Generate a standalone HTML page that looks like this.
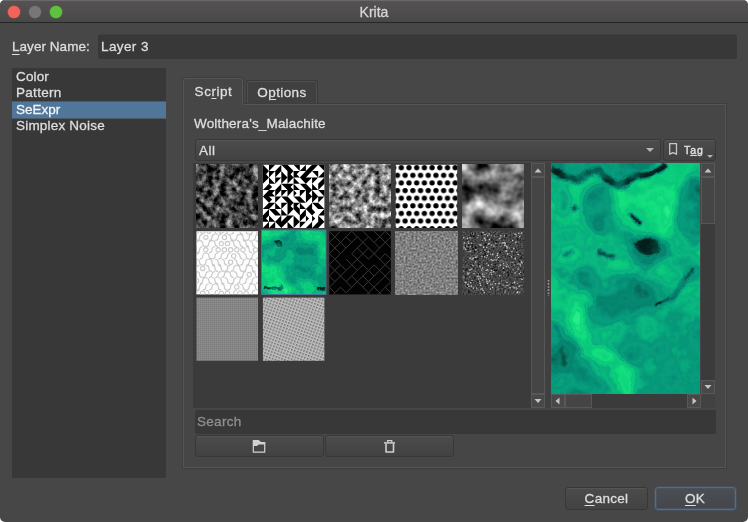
<!DOCTYPE html>
<html lang="en"><head><meta charset="utf-8"><title>Krita</title>
<style>
html,body{margin:0;padding:0;background:#fff;}
body{width:748px;height:522px;overflow:hidden;position:relative;font-family:"Liberation Sans",sans-serif;font-size:13px;color:#dedede;-webkit-text-stroke:0.3px currentColor;}
.win{position:absolute;left:0;top:0;width:748px;height:522px;background:#474747;border-radius:5px;overflow:hidden;will-change:transform;-webkit-font-smoothing:antialiased;}
.abs{position:absolute;box-sizing:border-box;}
.titlebar{left:0;top:0;width:748px;background:linear-gradient(#575355,#494848);border-bottom:1px solid #262626;height:23px;box-shadow:inset 0 1px 0 rgba(255,255,255,.13);}
.title{left:0;top:0;width:748px;height:22px;line-height:24px;text-align:center;font-size:14px;color:#d6d6d6;letter-spacing:0;}
.dot{width:12px;height:12px;border-radius:50%;top:5.5px;}
.lbl{white-space:nowrap;line-height:16px;}
u{text-decoration:underline;text-underline-offset:2px;text-decoration-thickness:1px;}
.field{background:#383838;border-radius:2px;}
.list{left:12px;top:68px;width:154px;height:410px;background:#383838;}
.item{left:0;width:154px;height:16px;line-height:16px;padding-left:4px;font-size:13.5px;letter-spacing:.1px;}
.sel{background:#4b6c8d;color:#f2f2f2;}
.pane{left:182px;top:103px;width:545px;height:366px;border:1px solid #3e3e3e;background:#464646;box-shadow:inset 0 0 0 1px #555;}
.tab{border:1px solid #3a3a3a;border-bottom:none;border-radius:3px 3px 0 0;text-align:center;font-size:13.5px;letter-spacing:.2px;}
.btn{border:1px solid #383838;border-radius:3px;background:linear-gradient(#4c4c4c,#424242);box-shadow:inset 0 1px 0 #555;}
.sb{background:#3b3b3b;}
.sbb{background:#484848;border:1px solid #585858;}
.sbt{background:#454545;border:1px solid #575757;}
</style></head>
<body>
<div class="win">
<div class="abs titlebar"></div>
<div class="abs title">Krita</div>
<div class="abs dot" style="left:8px;background:#f1635b;box-shadow:0 0 0 .5px #c8524b;"></div>
<div class="abs dot" style="left:29px;background:#787679;box-shadow:0 0 0 .5px #636164;"></div>
<div class="abs dot" style="left:50px;background:#5fc23e;box-shadow:0 0 0 .5px #4da232;"></div>
<div class="abs lbl" style="left:12px;top:39px;font-size:13.5px;letter-spacing:.05px;"><u style="text-underline-offset:3px">L</u>ayer Name:</div>
<div class="abs field" style="left:98px;top:35px;width:639px;height:24px;box-shadow:0 -1px 0 #3f3f3f;"></div>
<div class="abs lbl" style="left:101px;top:39px;font-size:13.5px;letter-spacing:.4px;">Layer 3</div>
<div class="abs list">
<div class="abs" style="left:0;top:33px;width:154px;height:18px;background:linear-gradient(#4a5a68 0,#4a5a68 1px,#50769a 1px,#50769a 17px,#4a5a68 17px);"></div>
<div class="abs item" style="top:1px;letter-spacing:0.15px;">Color</div>
<div class="abs item" style="top:17px;letter-spacing:0.3px;">Pattern</div>
<div class="abs item" style="top:34px;letter-spacing:0px;color:#f4f4f4;">SeExpr</div>
<div class="abs item" style="top:50px;letter-spacing:0.2px;">Simplex Noise</div>
</div>
<div class="abs pane"></div>
<div class="abs tab" style="left:246px;top:80px;width:72px;height:24px;line-height:23px;background:#404040;border-bottom:1px solid #3e3e3e;text-indent:0px;letter-spacing:.4px;box-shadow:inset 1px 1px 0 #505050,inset -1px 0 0 #505050;">O<u>p</u>tions</div>
<div class="abs tab" style="left:182px;top:77px;width:62px;height:28px;line-height:28px;background:#464646;box-shadow:inset 1px 1px 0 #555,inset -1px 0 0 #555;letter-spacing:.55px;text-indent:1px;border-color:#3e3e3e;">Sc<u>r</u>ipt</div>
<div class="abs lbl" style="left:194px;top:116px;font-size:13.5px;letter-spacing:.17px;">Wolthera's_Malachite</div>
<div class="abs btn" style="left:195px;top:139px;width:466px;height:22px;"></div>
<div class="abs lbl" style="left:199px;top:143px;font-size:13.5px;letter-spacing:.5px;">All</div>
<div class="abs" style="left:646px;top:148px;width:0;height:0;border-left:4px solid transparent;border-right:4px solid transparent;border-top:4px solid #b4b4b4;"></div>
<div class="abs btn" style="left:663px;top:139px;width:53px;height:22px;"></div>
<svg class="abs" style="left:668px;top:142px;" width="11" height="15" viewBox="0 0 11 15"><path d="M1.7 1.6h6.8v10.6l-3.4-1.5l-3.4 1.5z" fill="none" stroke="#c8c8c8" stroke-width="1.3" stroke-linejoin="round"/></svg>
<div class="abs lbl" style="left:684px;top:142px;font-size:10.5px;letter-spacing:.9px;color:#e0e0e0;-webkit-text-stroke:0.4px currentColor;">T<u style="text-underline-offset:1px">a</u>g</div>
<div class="abs" style="left:707px;top:155px;width:0;height:0;border-left:3px solid transparent;border-right:3px solid transparent;border-top:3px solid #b0b0b0;"></div>
<div class="abs" style="left:193px;top:163px;width:338px;height:245px;background:#3b3b3b;"></div>
<div class="abs" style="left:545px;top:163px;width:6px;height:245px;background:#404040;"></div>
<svg class="abs" style="left:0;top:0;" width="748" height="522" viewBox="0 0 748 522">
<defs>
<filter id="n1" x="0" y="0" width="100%" height="100%" color-interpolation-filters="sRGB"><feTurbulence type="fractalNoise" baseFrequency="0.15" numOctaves="4" seed="3" result="n"/><feColorMatrix type="matrix" values="1.3 0 0 0 -0.39  1.3 0 0 0 -0.39  1.3 0 0 0 -0.39  0 0 0 0 1"/></filter>
<filter id="n3" x="0" y="0" width="100%" height="100%" color-interpolation-filters="sRGB"><feTurbulence type="fractalNoise" baseFrequency="0.16" numOctaves="3" seed="11" result="n"/><feColorMatrix type="matrix" values="1.5 0 0 0 -0.24  1.5 0 0 0 -0.24  1.5 0 0 0 -0.24  0 0 0 0 1"/></filter>
<filter id="n5" x="0" y="0" width="100%" height="100%" color-interpolation-filters="sRGB"><feTurbulence type="fractalNoise" baseFrequency="0.055" numOctaves="3" seed="7" result="n"/><feColorMatrix type="matrix" values="1.5 0 0 0 -0.31  1.5 0 0 0 -0.31  1.5 0 0 0 -0.31  0 0 0 0 1"/></filter>
<filter id="n9" x="0" y="0" width="100%" height="100%" color-interpolation-filters="sRGB"><feTurbulence type="fractalNoise" baseFrequency="0.5" numOctaves="2" seed="5" result="n"/><feColorMatrix type="matrix" values="0.55 0 0 0 0.225  0.55 0 0 0 0.225  0.55 0 0 0 0.225  0 0 0 0 1"/></filter>
<filter id="n10" x="0" y="0" width="100%" height="100%" color-interpolation-filters="sRGB"><feTurbulence type="fractalNoise" baseFrequency="0.6" numOctaves="1" seed="9" result="n"/><feColorMatrix type="matrix" values="0.5 0 0 0 0.02  0.5 0 0 0 0.02  0.5 0 0 0 0.02  0 0 0 0 1"/></filter>
<clipPath id="c0"><rect x="196.5" y="164.8" width="61.5" height="63.2"/></clipPath>
<clipPath id="c1"><rect x="262.9" y="164.8" width="61.5" height="63.2"/></clipPath>
<clipPath id="c2"><rect x="329.3" y="164.8" width="61.5" height="63.2"/></clipPath>
<clipPath id="c3"><rect x="395.7" y="164.8" width="61.5" height="63.2"/></clipPath>
<clipPath id="c4"><rect x="462.1" y="164.8" width="61.5" height="63.2"/></clipPath>
<clipPath id="c5"><rect x="196.5" y="231.2" width="61.5" height="63.2"/></clipPath>
<clipPath id="c6"><rect x="262.9" y="231.2" width="61.5" height="63.2"/></clipPath>
<clipPath id="c7"><rect x="329.3" y="231.2" width="61.5" height="63.2"/></clipPath>
<clipPath id="c8"><rect x="395.7" y="231.2" width="61.5" height="63.2"/></clipPath>
<clipPath id="c9"><rect x="462.1" y="231.2" width="61.5" height="63.2"/></clipPath>
<clipPath id="c10"><rect x="196.5" y="297.6" width="61.5" height="63.2"/></clipPath>
<clipPath id="c11"><rect x="262.9" y="297.6" width="61.5" height="63.2"/></clipPath>
<pattern id="polka" x="397.45" y="165.10" width="7.7" height="15.24" patternUnits="userSpaceOnUse"><rect width="7.7" height="15.24" fill="#fff"/><circle cx="3.85" cy="2.7" r="2.65" fill="#000"/><circle cx="0" cy="10.32" r="2.65" fill="#000"/><circle cx="7.7" cy="10.32" r="2.65" fill="#000"/></pattern>
<pattern id="fine11" width="2" height="2" patternUnits="userSpaceOnUse"><rect width="2" height="2" fill="#858585"/><rect width="1" height="1" fill="#7b7b7b"/><rect x="1" y="1" width="1" height="1" fill="#8f8f8f"/></pattern>
<pattern id="fine12" width="3" height="3" patternUnits="userSpaceOnUse" patternTransform="rotate(20)"><rect width="3" height="3" fill="#bebebe"/><rect width="1.6" height="1.6" fill="#6e6e6e"/></pattern>
<clipPath id="c6m"><rect x="262" y="230.5" width="63.5" height="63.5"/></clipPath>
<filter id="mb" x="-20%" y="-20%" width="140%" height="140%" color-interpolation-filters="sRGB"><feGaussianBlur stdDeviation="2"/></filter>
<filter id="md" x="-20%" y="-20%" width="140%" height="140%" color-interpolation-filters="sRGB"><feGaussianBlur stdDeviation="0.7"/></filter>
<filter id="malt" filterUnits="userSpaceOnUse" x="255" y="224" width="78" height="78" color-interpolation-filters="sRGB"><feTurbulence type="fractalNoise" baseFrequency="0.07" numOctaves="4" seed="5" result="t"/><feDisplacementMap in="SourceGraphic" in2="t" scale="6" xChannelSelector="R" yChannelSelector="G" result="d"/><feColorMatrix in="t" type="matrix" values="0 0 1 0 0  0 0 1 0 0  0 0 1 0 0  0 0 0 0 1" result="n"/><feComposite in="d" in2="n" operator="arithmetic" k1="0" k2="1" k3="0.5" k4="-0.25" result="f"/><feComponentTransfer in="f"><feFuncR type="table" tableValues="0.016 0.020 0.020 0.024 0.024 0.024 0.020 0.024 0.031 0.024 0.031 0.039 0.031 0.039 0.047 0.039 0.055 0.078 0.055 0.118 0.157"/><feFuncG type="table" tableValues="0.118 0.176 0.275 0.373 0.471 0.541 0.510 0.573 0.627 0.588 0.667 0.729 0.682 0.769 0.816 0.773 0.843 0.882 0.831 0.910 0.933"/><feFuncB type="table" tableValues="0.110 0.157 0.227 0.314 0.392 0.447 0.431 0.471 0.490 0.471 0.494 0.502 0.490 0.494 0.490 0.486 0.486 0.502 0.486 0.529 0.549"/></feComponentTransfer></filter>
</defs>
<rect x="196.5" y="164.8" width="61.5" height="63.2" fill="#444" filter="url(#n1)"/>
<rect x="262.9" y="164.8" width="61.5" height="63.2" fill="#fff" />
<path d="M262.9 164.8L269.0 171.1L262.9 171.1ZM269.0 164.8L275.2 164.8L269.0 171.1ZM281.3 164.8L281.3 171.1L275.2 171.1ZM281.3 164.8L287.5 164.8L287.5 171.1ZM287.5 164.8L293.6 171.1L287.5 171.1ZM293.6 164.8L299.8 164.8L299.8 171.1ZM305.9 164.8L305.9 171.1L299.8 171.1ZM312.1 164.8L312.1 171.1L305.9 171.1ZM312.1 164.8L318.2 164.8L312.1 171.1ZM318.2 164.8L324.4 164.8L324.4 171.1ZM262.9 171.1L269.0 171.1L266.0 174.3L269.0 177.4L262.9 177.4ZM269.0 171.1L275.2 171.1L269.0 177.4ZM275.2 171.1L281.3 171.1L275.2 177.4ZM281.3 171.1L287.5 177.4L281.3 177.4ZM287.5 171.1L293.6 171.1L290.6 174.3L293.6 177.4L287.5 177.4ZM293.6 171.1L299.8 171.1L296.7 174.3L299.8 177.4L293.6 177.4ZM305.9 171.1L305.9 177.4L299.8 177.4ZM305.9 171.1L312.1 171.1L305.9 177.4ZM312.1 171.1L318.2 171.1L318.2 177.4ZM324.4 171.1L324.4 177.4L318.2 177.4ZM262.9 177.4L269.0 177.4L262.9 183.8ZM269.0 177.4L275.2 183.8L269.0 183.8ZM275.2 177.4L281.3 177.4L275.2 183.8ZM281.3 177.4L287.5 177.4L281.3 183.8ZM287.5 177.4L293.6 177.4L287.5 183.8ZM293.6 177.4L299.8 183.8L293.6 183.8ZM299.8 177.4L305.9 177.4L305.9 183.8ZM305.9 177.4L312.1 177.4L305.9 183.8ZM312.1 177.4L318.2 177.4L312.1 183.8ZM324.4 177.4L324.4 183.8L318.2 183.8ZM269.0 183.8L269.0 190.1L262.9 190.1ZM269.0 183.8L272.1 186.9L269.0 190.1ZM281.3 183.8L281.3 190.1L275.2 190.1ZM281.3 183.8L287.5 183.8L287.5 190.1ZM287.5 183.8L293.6 183.8L290.6 186.9L293.6 190.1L287.5 190.1ZM293.6 183.8L299.8 190.1L293.6 190.1ZM299.8 183.8L305.9 183.8L305.9 190.1ZM305.9 183.8L312.1 190.1L305.9 190.1ZM312.1 183.8L318.2 190.1L312.1 190.1ZM318.2 183.8L324.4 183.8L318.2 190.1ZM269.0 190.1L269.0 196.4L262.9 196.4ZM269.0 190.1L275.2 190.1L272.1 193.2L275.2 196.4L269.0 196.4ZM275.2 190.1L281.3 190.1L275.2 196.4ZM281.3 190.1L287.5 190.1L281.3 196.4ZM287.5 190.1L293.6 190.1L287.5 196.4ZM293.6 190.1L296.7 193.2L293.6 196.4ZM299.8 190.1L305.9 190.1L299.8 196.4ZM305.9 190.1L312.1 190.1L309.0 193.2L312.1 196.4L305.9 196.4ZM312.1 190.1L318.2 196.4L312.1 196.4ZM318.2 190.1L324.4 190.1L324.4 196.4ZM262.9 196.4L269.0 196.4L269.0 202.7ZM269.0 196.4L272.1 199.6L269.0 202.7ZM275.2 196.4L281.3 196.4L275.2 202.7ZM281.3 196.4L287.5 196.4L287.5 202.7ZM287.5 196.4L293.6 202.7L287.5 202.7ZM293.6 196.4L299.8 196.4L299.8 202.7ZM299.8 196.4L305.9 202.7L299.8 202.7ZM305.9 196.4L312.1 196.4L305.9 202.7ZM312.1 196.4L318.2 196.4L312.1 202.7ZM318.2 196.4L324.4 196.4L318.2 202.7ZM269.0 202.7L269.0 209.0L262.9 209.0ZM269.0 202.7L275.2 202.7L269.0 209.0ZM275.2 202.7L281.3 209.0L275.2 209.0ZM281.3 202.7L287.5 202.7L281.3 209.0ZM287.5 202.7L293.6 202.7L290.6 205.9L293.6 209.0L287.5 209.0ZM293.6 202.7L299.8 202.7L296.7 205.9L299.8 209.0L293.6 209.0ZM299.8 202.7L305.9 209.0L299.8 209.0ZM312.1 202.7L312.1 209.0L305.9 209.0ZM312.1 202.7L318.2 202.7L318.2 209.0ZM318.2 202.7L324.4 209.0L318.2 209.0ZM269.0 209.0L269.0 215.4L262.9 215.4ZM269.0 209.0L275.2 209.0L275.2 215.4ZM275.2 209.0L281.3 215.4L275.2 215.4ZM281.3 209.0L287.5 215.4L281.3 215.4ZM287.5 209.0L293.6 209.0L287.5 215.4ZM293.6 209.0L299.8 209.0L299.8 215.4ZM305.9 209.0L305.9 215.4L299.8 215.4ZM305.9 209.0L312.1 209.0L312.1 215.4ZM312.1 209.0L315.2 212.2L312.1 215.4ZM324.4 209.0L324.4 215.4L318.2 215.4ZM262.9 215.4L269.0 215.4L266.0 218.5L269.0 221.7L262.9 221.7ZM269.0 215.4L275.2 221.7L269.0 221.7ZM281.3 215.4L281.3 221.7L275.2 221.7ZM287.5 215.4L287.5 221.7L281.3 221.7ZM287.5 215.4L293.6 215.4L287.5 221.7ZM293.6 215.4L299.8 221.7L293.6 221.7ZM299.8 215.4L305.9 215.4L299.8 221.7ZM305.9 215.4L309.0 218.5L305.9 221.7ZM312.1 215.4L315.2 218.5L312.1 221.7ZM318.2 215.4L324.4 221.7L318.2 221.7ZM269.0 221.7L269.0 228.0L262.9 228.0ZM275.2 221.7L275.2 228.0L269.0 228.0ZM275.2 221.7L281.3 221.7L281.3 228.0ZM281.3 221.7L287.5 221.7L281.3 228.0ZM287.5 221.7L293.6 228.0L287.5 228.0ZM293.6 221.7L299.8 221.7L293.6 228.0ZM299.8 221.7L305.9 221.7L299.8 228.0ZM312.1 221.7L312.1 228.0L305.9 228.0ZM318.2 221.7L318.2 228.0L312.1 228.0ZM318.2 221.7L324.4 221.7L318.2 228.0Z" fill="#000"/>
<rect x="329.3" y="164.8" width="61.5" height="63.2" fill="#888" filter="url(#n3)"/>
<rect x="395.7" y="164.8" width="61.5" height="63.2" fill="url(#polka)" />
<rect x="462.1" y="164.8" width="61.5" height="63.2" fill="#888" filter="url(#n5)"/>
<rect x="196.5" y="231.2" width="61.5" height="63.2" fill="#fdfdfd" />
<path d="M194.3 231.2a2.2 2.2 0 1 0 4.4 0a2.2 2.2 0 1 0 -4.4 0M200.5 231.2a2.2 2.2 0 1 0 4.4 0a2.2 2.2 0 1 0 -4.4 0M206.7 231.2a2.2 2.2 0 1 0 4.4 0a2.2 2.2 0 1 0 -4.4 0M212.1 228.2q3.0 0.0 3.0 3.0q0.0 3.0 3.0 3.0M219.1 231.2a2.2 2.2 0 1 0 4.4 0a2.2 2.2 0 1 0 -4.4 0M230.5 228.2q-3.0 0.0 -3.0 3.0q0.0 3.0 -3.0 3.0M236.7 228.2q-3.0 0.0 -3.0 3.0q0.0 3.0 -3.0 3.0M236.9 228.2q3.0 0.0 3.0 3.0q0.0 3.0 3.0 3.0M243.1 228.2q3.0 0.0 3.0 3.0q0.0 3.0 3.0 3.0M255.3 228.2q-3.0 0.0 -3.0 3.0q0.0 3.0 -3.0 3.0M256.3 231.2a2.2 2.2 0 1 0 4.4 0a2.2 2.2 0 1 0 -4.4 0M202.6 234.4q-3.0 0.0 -3.0 3.0q0.0 3.0 -3.0 3.0M203.6 237.4a2.2 2.2 0 1 0 4.4 0a2.2 2.2 0 1 0 -4.4 0M215.0 234.4q-3.0 0.0 -3.0 3.0q0.0 3.0 -3.0 3.0M221.2 234.4q-3.0 0.0 -3.0 3.0q0.0 3.0 -3.0 3.0M222.2 237.4a2.2 2.2 0 1 0 4.4 0a2.2 2.2 0 1 0 -4.4 0M227.6 234.4q3.0 0.0 3.0 3.0q0.0 3.0 3.0 3.0M239.8 234.4q-3.0 0.0 -3.0 3.0q0.0 3.0 -3.0 3.0M240.0 234.4q3.0 0.0 3.0 3.0q0.0 3.0 3.0 3.0M252.2 234.4q-3.0 0.0 -3.0 3.0q0.0 3.0 -3.0 3.0M258.4 234.4q-3.0 0.0 -3.0 3.0q0.0 3.0 -3.0 3.0M258.6 234.4q3.0 0.0 3.0 3.0q0.0 3.0 3.0 3.0M199.5 240.6q-3.0 0.0 -3.0 3.0q0.0 3.0 -3.0 3.0M199.7 240.6q3.0 0.0 3.0 3.0q0.0 3.0 3.0 3.0M211.9 240.6q-3.0 0.0 -3.0 3.0q0.0 3.0 -3.0 3.0M212.1 240.6q3.0 0.0 3.0 3.0q0.0 3.0 3.0 3.0M219.1 243.6a2.2 2.2 0 1 0 4.4 0a2.2 2.2 0 1 0 -4.4 0M225.3 243.6a2.2 2.2 0 1 0 4.4 0a2.2 2.2 0 1 0 -4.4 0M230.7 240.6q3.0 0.0 3.0 3.0q0.0 3.0 3.0 3.0M236.9 240.6q3.0 0.0 3.0 3.0q0.0 3.0 3.0 3.0M243.1 240.6q3.0 0.0 3.0 3.0q0.0 3.0 3.0 3.0M249.3 240.6q3.0 0.0 3.0 3.0q0.0 3.0 3.0 3.0M255.5 240.6q3.0 0.0 3.0 3.0q0.0 3.0 3.0 3.0M202.6 246.8q-3.0 0.0 -3.0 3.0q0.0 3.0 -3.0 3.0M203.6 249.8a2.2 2.2 0 1 0 4.4 0a2.2 2.2 0 1 0 -4.4 0M215.0 246.8q-3.0 0.0 -3.0 3.0q0.0 3.0 -3.0 3.0M216.0 249.8a2.2 2.2 0 1 0 4.4 0a2.2 2.2 0 1 0 -4.4 0M222.2 249.8a2.2 2.2 0 1 0 4.4 0a2.2 2.2 0 1 0 -4.4 0M228.4 249.8a2.2 2.2 0 1 0 4.4 0a2.2 2.2 0 1 0 -4.4 0M234.6 249.8a2.2 2.2 0 1 0 4.4 0a2.2 2.2 0 1 0 -4.4 0M240.8 249.8a2.2 2.2 0 1 0 4.4 0a2.2 2.2 0 1 0 -4.4 0M246.2 246.8q3.0 0.0 3.0 3.0q0.0 3.0 3.0 3.0M253.2 249.8a2.2 2.2 0 1 0 4.4 0a2.2 2.2 0 1 0 -4.4 0M259.4 249.8a2.2 2.2 0 1 0 4.4 0a2.2 2.2 0 1 0 -4.4 0M199.5 253.0q-3.0 0.0 -3.0 3.0q0.0 3.0 -3.0 3.0M205.7 253.0q-3.0 0.0 -3.0 3.0q0.0 3.0 -3.0 3.0M205.9 253.0q3.0 0.0 3.0 3.0q0.0 3.0 3.0 3.0M218.1 253.0q-3.0 0.0 -3.0 3.0q0.0 3.0 -3.0 3.0M224.3 253.0q-3.0 0.0 -3.0 3.0q0.0 3.0 -3.0 3.0M230.5 253.0q-3.0 0.0 -3.0 3.0q0.0 3.0 -3.0 3.0M231.5 256.0a2.2 2.2 0 1 0 4.4 0a2.2 2.2 0 1 0 -4.4 0M236.9 253.0q3.0 0.0 3.0 3.0q0.0 3.0 3.0 3.0M243.1 253.0q3.0 0.0 3.0 3.0q0.0 3.0 3.0 3.0M255.3 253.0q-3.0 0.0 -3.0 3.0q0.0 3.0 -3.0 3.0M261.5 253.0q-3.0 0.0 -3.0 3.0q0.0 3.0 -3.0 3.0M196.6 259.2q3.0 0.0 3.0 3.0q0.0 3.0 3.0 3.0M208.8 259.2q-3.0 0.0 -3.0 3.0q0.0 3.0 -3.0 3.0M209.0 259.2q3.0 0.0 3.0 3.0q0.0 3.0 3.0 3.0M215.2 259.2q3.0 0.0 3.0 3.0q0.0 3.0 3.0 3.0M221.4 259.2q3.0 0.0 3.0 3.0q0.0 3.0 3.0 3.0M228.4 262.2a2.2 2.2 0 1 0 4.4 0a2.2 2.2 0 1 0 -4.4 0M233.8 259.2q3.0 0.0 3.0 3.0q0.0 3.0 3.0 3.0M246.0 259.2q-3.0 0.0 -3.0 3.0q0.0 3.0 -3.0 3.0M252.2 259.2q-3.0 0.0 -3.0 3.0q0.0 3.0 -3.0 3.0M252.4 259.2q3.0 0.0 3.0 3.0q0.0 3.0 3.0 3.0M264.6 259.2q-3.0 0.0 -3.0 3.0q0.0 3.0 -3.0 3.0M199.5 265.4q-3.0 0.0 -3.0 3.0q0.0 3.0 -3.0 3.0M200.5 268.4a2.2 2.2 0 1 0 4.4 0a2.2 2.2 0 1 0 -4.4 0M205.9 265.4q3.0 0.0 3.0 3.0q0.0 3.0 3.0 3.0M212.1 265.4q3.0 0.0 3.0 3.0q0.0 3.0 3.0 3.0M218.3 265.4q3.0 0.0 3.0 3.0q0.0 3.0 3.0 3.0M230.5 265.4q-3.0 0.0 -3.0 3.0q0.0 3.0 -3.0 3.0M236.7 265.4q-3.0 0.0 -3.0 3.0q0.0 3.0 -3.0 3.0M236.9 265.4q3.0 0.0 3.0 3.0q0.0 3.0 3.0 3.0M249.1 265.4q-3.0 0.0 -3.0 3.0q0.0 3.0 -3.0 3.0M249.3 265.4q3.0 0.0 3.0 3.0q0.0 3.0 3.0 3.0M255.5 265.4q3.0 0.0 3.0 3.0q0.0 3.0 3.0 3.0M196.6 271.6q3.0 0.0 3.0 3.0q0.0 3.0 3.0 3.0M208.8 271.6q-3.0 0.0 -3.0 3.0q0.0 3.0 -3.0 3.0M215.0 271.6q-3.0 0.0 -3.0 3.0q0.0 3.0 -3.0 3.0M221.2 271.6q-3.0 0.0 -3.0 3.0q0.0 3.0 -3.0 3.0M227.4 271.6q-3.0 0.0 -3.0 3.0q0.0 3.0 -3.0 3.0M227.6 271.6q3.0 0.0 3.0 3.0q0.0 3.0 3.0 3.0M233.8 271.6q3.0 0.0 3.0 3.0q0.0 3.0 3.0 3.0M246.0 271.6q-3.0 0.0 -3.0 3.0q0.0 3.0 -3.0 3.0M247.0 274.6a2.2 2.2 0 1 0 4.4 0a2.2 2.2 0 1 0 -4.4 0M252.4 271.6q3.0 0.0 3.0 3.0q0.0 3.0 3.0 3.0M264.6 271.6q-3.0 0.0 -3.0 3.0q0.0 3.0 -3.0 3.0M194.3 280.8a2.2 2.2 0 1 0 4.4 0a2.2 2.2 0 1 0 -4.4 0M205.7 277.8q-3.0 0.0 -3.0 3.0q0.0 3.0 -3.0 3.0M205.9 277.8q3.0 0.0 3.0 3.0q0.0 3.0 3.0 3.0M212.1 277.8q3.0 0.0 3.0 3.0q0.0 3.0 3.0 3.0M218.3 277.8q3.0 0.0 3.0 3.0q0.0 3.0 3.0 3.0M224.5 277.8q3.0 0.0 3.0 3.0q0.0 3.0 3.0 3.0M236.7 277.8q-3.0 0.0 -3.0 3.0q0.0 3.0 -3.0 3.0M242.9 277.8q-3.0 0.0 -3.0 3.0q0.0 3.0 -3.0 3.0M249.1 277.8q-3.0 0.0 -3.0 3.0q0.0 3.0 -3.0 3.0M255.3 277.8q-3.0 0.0 -3.0 3.0q0.0 3.0 -3.0 3.0M261.5 277.8q-3.0 0.0 -3.0 3.0q0.0 3.0 -3.0 3.0M202.6 284.0q-3.0 0.0 -3.0 3.0q0.0 3.0 -3.0 3.0M208.8 284.0q-3.0 0.0 -3.0 3.0q0.0 3.0 -3.0 3.0M215.0 284.0q-3.0 0.0 -3.0 3.0q0.0 3.0 -3.0 3.0M215.2 284.0q3.0 0.0 3.0 3.0q0.0 3.0 3.0 3.0M221.4 284.0q3.0 0.0 3.0 3.0q0.0 3.0 3.0 3.0M233.6 284.0q-3.0 0.0 -3.0 3.0q0.0 3.0 -3.0 3.0M234.6 287.0a2.2 2.2 0 1 0 4.4 0a2.2 2.2 0 1 0 -4.4 0M240.0 284.0q3.0 0.0 3.0 3.0q0.0 3.0 3.0 3.0M252.2 284.0q-3.0 0.0 -3.0 3.0q0.0 3.0 -3.0 3.0M252.4 284.0q3.0 0.0 3.0 3.0q0.0 3.0 3.0 3.0M264.6 284.0q-3.0 0.0 -3.0 3.0q0.0 3.0 -3.0 3.0M199.5 290.2q-3.0 0.0 -3.0 3.0q0.0 3.0 -3.0 3.0M200.5 293.2a2.2 2.2 0 1 0 4.4 0a2.2 2.2 0 1 0 -4.4 0M205.9 290.2q3.0 0.0 3.0 3.0q0.0 3.0 3.0 3.0M218.1 290.2q-3.0 0.0 -3.0 3.0q0.0 3.0 -3.0 3.0M219.1 293.2a2.2 2.2 0 1 0 4.4 0a2.2 2.2 0 1 0 -4.4 0M225.3 293.2a2.2 2.2 0 1 0 4.4 0a2.2 2.2 0 1 0 -4.4 0M236.7 290.2q-3.0 0.0 -3.0 3.0q0.0 3.0 -3.0 3.0M237.7 293.2a2.2 2.2 0 1 0 4.4 0a2.2 2.2 0 1 0 -4.4 0M243.9 293.2a2.2 2.2 0 1 0 4.4 0a2.2 2.2 0 1 0 -4.4 0M255.3 290.2q-3.0 0.0 -3.0 3.0q0.0 3.0 -3.0 3.0M261.5 290.2q-3.0 0.0 -3.0 3.0q0.0 3.0 -3.0 3.0" fill="none" stroke="#c9c9c9" stroke-width="1.1" clip-path="url(#c5)"/>
<rect x="261" y="229.5" width="65.5" height="65.5" fill="#4d7590"/>
<g clip-path="url(#c6m)"><g filter="url(#malt)">
<rect x="250" y="220" width="90" height="90" fill="#808080"/>
<g filter="url(#mb)">
<rect x="250" y="220" width="90" height="90" fill="#808080"/>
<path d="M254 224h34l-4 14l-14 6l-16 -2z" fill="#cccccc"/>
<path d="M290 222h44v12l-24 6z" fill="#a8a8a8"/>
<ellipse cx="279" cy="247" rx="12" ry="9" fill="#5c5c5c"/>
<path d="M256 262l18 2l10 12l8 14l-6 10h-12l-18 -14z" fill="#d6d6d6"/>
<path d="M316 234l16 -2v30l-14 -6z" fill="#bdbdbd"/>
<ellipse cx="305" cy="262" rx="14" ry="16" fill="#616161"/>
<path d="M290 284l20 -4l20 6v14h-40z" fill="#9e9e9e"/>
</g>
<g filter="url(#md)">
<circle cx="278" cy="243.5" r="3.4" fill="#0a0a0a"/>
<path d="M264 287l5 2l5 -1l5 1l4 -3" fill="none" stroke="#292929" stroke-width="3.2"/>
<path d="M316 288l6 2l4 -1" fill="none" stroke="#292929" stroke-width="3"/>
</g>
</g></g>
<rect x="329.3" y="231.2" width="61.5" height="63.2" fill="#020202" />
<path d="M323.7 225.6l5.6 5.6M334.9 225.6l-5.6 5.6M334.9 225.6l5.6 5.6M346.1 225.6l-5.6 5.6M346.1 225.6l5.6 5.6M357.3 225.6l-5.6 5.6M357.3 225.6l5.6 5.6M368.5 225.6l-5.6 5.6M368.5 225.6l5.6 5.6M379.7 225.6l-5.6 5.6M379.7 225.6l5.6 5.6M390.9 225.6l-5.6 5.6M390.9 225.6l5.6 5.6M329.3 231.2l-5.6 5.6M329.3 231.2l5.6 5.6M340.5 231.2l-5.6 5.6M351.7 231.2l-5.6 5.6M351.7 231.2l5.6 5.6M362.9 231.2l5.6 5.6M374.1 231.2l5.6 5.6M385.3 231.2l-5.6 5.6M385.3 231.2l5.6 5.6M396.5 231.2l-5.6 5.6M323.7 236.8l5.6 5.6M334.9 236.8l-5.6 5.6M334.9 236.8l5.6 5.6M346.1 236.8l-5.6 5.6M346.1 236.8l5.6 5.6M357.3 236.8l-5.6 5.6M357.3 236.8l5.6 5.6M368.5 236.8l-5.6 5.6M368.5 236.8l5.6 5.6M379.7 236.8l-5.6 5.6M379.7 236.8l5.6 5.6M390.9 236.8l-5.6 5.6M390.9 236.8l5.6 5.6M402.1 236.8l-5.6 5.6M329.3 242.4l-5.6 5.6M329.3 242.4l5.6 5.6M340.5 242.4l-5.6 5.6M340.5 242.4l5.6 5.6M351.7 242.4l-5.6 5.6M362.9 242.4l-5.6 5.6M362.9 242.4l5.6 5.6M374.1 242.4l5.6 5.6M385.3 242.4l-5.6 5.6M385.3 242.4l5.6 5.6M396.5 242.4l-5.6 5.6M396.5 242.4l5.6 5.6M323.7 248.0l5.6 5.6M334.9 248.0l-5.6 5.6M334.9 248.0l5.6 5.6M346.1 248.0l-5.6 5.6M357.3 248.0l-5.6 5.6M357.3 248.0l5.6 5.6M368.5 248.0l-5.6 5.6M368.5 248.0l5.6 5.6M379.7 248.0l-5.6 5.6M390.9 248.0l5.6 5.6M402.1 248.0l-5.6 5.6M329.3 253.6l-5.6 5.6M329.3 253.6l5.6 5.6M340.5 253.6l-5.6 5.6M351.7 253.6l5.6 5.6M362.9 253.6l-5.6 5.6M362.9 253.6l5.6 5.6M374.1 253.6l-5.6 5.6M374.1 253.6l5.6 5.6M385.3 253.6l-5.6 5.6M385.3 253.6l5.6 5.6M396.5 253.6l-5.6 5.6M396.5 253.6l5.6 5.6M323.7 259.2l5.6 5.6M334.9 259.2l-5.6 5.6M334.9 259.2l5.6 5.6M346.1 259.2l5.6 5.6M357.3 259.2l-5.6 5.6M357.3 259.2l5.6 5.6M379.7 259.2l5.6 5.6M390.9 259.2l-5.6 5.6M390.9 259.2l5.6 5.6M329.3 264.8l5.6 5.6M340.5 264.8l-5.6 5.6M340.5 264.8l5.6 5.6M351.7 264.8l-5.6 5.6M351.7 264.8l5.6 5.6M362.9 264.8l-5.6 5.6M362.9 264.8l5.6 5.6M374.1 264.8l-5.6 5.6M374.1 264.8l5.6 5.6M385.3 264.8l-5.6 5.6M385.3 264.8l5.6 5.6M396.5 264.8l5.6 5.6M323.7 270.4l5.6 5.6M334.9 270.4l-5.6 5.6M334.9 270.4l5.6 5.6M346.1 270.4l-5.6 5.6M357.3 270.4l-5.6 5.6M368.5 270.4l-5.6 5.6M368.5 270.4l5.6 5.6M379.7 270.4l-5.6 5.6M379.7 270.4l5.6 5.6M390.9 270.4l-5.6 5.6M390.9 270.4l5.6 5.6M402.1 270.4l-5.6 5.6M329.3 276.0l-5.6 5.6M329.3 276.0l5.6 5.6M340.5 276.0l-5.6 5.6M340.5 276.0l5.6 5.6M351.7 276.0l-5.6 5.6M351.7 276.0l5.6 5.6M362.9 276.0l-5.6 5.6M362.9 276.0l5.6 5.6M374.1 276.0l-5.6 5.6M385.3 276.0l-5.6 5.6M385.3 276.0l5.6 5.6M396.5 276.0l-5.6 5.6M396.5 276.0l5.6 5.6M323.7 281.6l5.6 5.6M334.9 281.6l-5.6 5.6M346.1 281.6l5.6 5.6M357.3 281.6l-5.6 5.6M357.3 281.6l5.6 5.6M368.5 281.6l-5.6 5.6M368.5 281.6l5.6 5.6M379.7 281.6l-5.6 5.6M390.9 281.6l-5.6 5.6M390.9 281.6l5.6 5.6M329.3 287.2l-5.6 5.6M329.3 287.2l5.6 5.6M340.5 287.2l-5.6 5.6M340.5 287.2l5.6 5.6M351.7 287.2l-5.6 5.6M362.9 287.2l5.6 5.6M374.1 287.2l-5.6 5.6M374.1 287.2l5.6 5.6M385.3 287.2l-5.6 5.6M385.3 287.2l5.6 5.6M396.5 287.2l-5.6 5.6M396.5 287.2l5.6 5.6M323.7 292.8l5.6 5.6M334.9 292.8l-5.6 5.6M368.5 292.8l-5.6 5.6M368.5 292.8l5.6 5.6M379.7 292.8l-5.6 5.6M379.7 292.8l5.6 5.6M390.9 292.8l-5.6 5.6M390.9 292.8l5.6 5.6M402.1 292.8l-5.6 5.6M329.3 298.4l-5.6 5.6M329.3 298.4l5.6 5.6M340.5 298.4l5.6 5.6M362.9 298.4l5.6 5.6M374.1 298.4l-5.6 5.6M374.1 298.4l5.6 5.6M385.3 298.4l-5.6 5.6M385.3 298.4l5.6 5.6M396.5 298.4l-5.6 5.6" fill="none" stroke="#3a3a3a" stroke-width="1" clip-path="url(#c7)"/>
<rect x="395.7" y="231.2" width="61.5" height="63.2" fill="#888" filter="url(#n9)"/>
<rect x="462.1" y="231.2" width="61.5" height="63.2" fill="#4e4e4e" filter="url(#n10)"/>
<path d="M471.9 233.4h0M472.1 259.2h0M468.0 274.1h0M487.3 283.4h0M470.2 258.2h0M481.9 270.1h0M504.4 235.8h0M511.3 256.8h0M498.5 261.4h0M520.7 272.6h0M470.3 246.8h0M465.2 282.2h0M494.0 246.1h0M486.3 279.2h0M465.8 249.3h0M500.9 235.8h0M475.8 249.7h0M473.4 288.3h0M483.6 247.2h0M522.0 263.0h0M491.5 270.4h0M519.0 286.5h0M480.6 285.3h0M504.8 245.6h0M471.3 286.1h0M519.9 278.5h0M497.5 253.6h0M506.6 266.6h0M509.8 255.5h0M486.7 247.5h0M482.5 274.0h0M485.0 234.5h0M483.6 247.0h0M518.8 233.2h0M480.0 244.8h0M504.4 242.5h0M499.1 283.4h0M484.1 276.8h0M492.8 254.4h0M487.7 269.9h0M487.4 255.6h0M487.0 281.3h0M514.7 282.1h0M506.6 251.1h0M514.2 282.8h0M515.1 234.2h0M464.4 243.0h0M505.5 250.6h0M519.5 273.8h0M512.7 240.5h0M469.9 237.8h0M464.1 247.7h0M488.4 265.4h0M518.2 254.5h0M464.3 246.5h0M521.5 261.9h0M500.1 265.0h0M507.2 247.9h0M497.4 255.5h0M484.4 292.8h0M493.0 260.4h0M487.0 245.0h0M467.9 273.1h0M503.0 243.0h0M480.1 283.3h0M490.4 289.1h0M499.6 275.7h0M488.2 251.6h0M487.8 235.8h0M470.4 251.2h0M470.7 282.8h0M470.0 269.9h0M489.1 234.0h0M484.6 256.8h0M495.4 283.7h0M484.9 250.0h0M471.8 269.0h0M520.1 264.8h0M480.3 278.2h0M484.5 238.4h0M482.0 289.1h0M504.9 245.0h0M519.7 236.7h0M522.0 279.6h0M516.9 251.8h0M491.7 245.0h0M467.5 238.4h0M503.3 268.2h0M491.2 259.6h0M475.4 257.5h0M503.6 263.8h0M472.0 265.3h0M482.6 268.0h0M477.2 276.7h0M515.6 242.3h0M492.6 287.4h0M479.7 265.8h0M513.9 248.4h0M515.0 273.0h0M466.0 282.8h0M464.1 276.9h0M481.1 245.2h0M468.7 243.3h0M510.0 287.8h0M483.2 290.5h0M479.0 276.1h0M507.0 285.6h0M517.1 292.8h0M478.6 279.0h0M463.8 237.8h0M514.1 287.9h0M469.0 286.2h0M511.9 251.5h0M482.0 256.3h0M505.3 243.2h0M521.5 233.1h0M484.4 251.4h0M469.9 258.2h0M506.8 246.4h0M500.0 238.2h0M507.5 253.9h0M471.6 243.4h0M488.6 243.9h0M489.6 239.5h0M473.3 258.1h0M467.8 284.5h0M482.9 276.0h0M467.8 241.5h0M515.2 258.4h0M498.5 257.5h0M474.0 273.8h0M517.7 291.9h0M467.2 286.9h0M486.1 270.2h0M489.7 280.8h0M475.8 262.1h0M500.2 265.2h0M485.6 240.1h0M466.9 246.0h0M483.0 232.8h0M493.7 271.7h0M491.5 274.2h0" stroke="#c8c8c8" stroke-width="1.6" stroke-linecap="round" fill="none"/>
<path d="M491.4 272.3h0M479.6 281.5h0M498.8 266.3h0M516.6 236.2h0M467.2 287.8h0M484.8 274.2h0M493.5 281.5h0M495.8 243.4h0M464.0 248.8h0M482.5 280.1h0M501.0 246.5h0M518.8 263.7h0M478.5 273.8h0M498.0 286.9h0M505.1 287.1h0M516.1 287.5h0M503.9 265.3h0M470.9 264.9h0M468.9 251.5h0M489.6 243.5h0M476.5 288.0h0M490.5 284.2h0M476.9 265.1h0M486.7 273.2h0M520.5 266.0h0M471.6 246.3h0M478.3 235.5h0M480.3 289.1h0M482.4 240.3h0M512.9 269.3h0M494.2 235.9h0M499.1 238.9h0M495.0 259.7h0M501.7 280.9h0M500.8 260.8h0M486.3 257.7h0M492.4 284.2h0M487.3 269.3h0M491.4 245.1h0M477.7 237.9h0M519.3 292.1h0M517.6 268.8h0M506.4 282.4h0M477.1 255.9h0M469.6 277.1h0M473.7 265.7h0M481.0 252.7h0M486.8 263.7h0M475.1 271.1h0M490.8 254.3h0M507.6 247.1h0M506.1 262.9h0M516.4 241.8h0M516.8 288.8h0M508.4 265.9h0M512.6 283.2h0M517.4 264.1h0M512.9 286.7h0M516.3 234.2h0M476.5 257.2h0M507.3 264.3h0M503.2 285.0h0M476.7 256.9h0M480.1 267.0h0M507.6 282.3h0M473.5 233.9h0M487.9 252.3h0M482.2 288.8h0M488.8 282.0h0M519.7 285.7h0M516.0 288.8h0M503.0 260.9h0M504.9 292.0h0M517.0 271.8h0M518.5 269.3h0M517.5 283.3h0M502.1 242.9h0M477.0 288.9h0M504.3 272.1h0M489.7 274.1h0M467.5 240.6h0M505.6 291.9h0M521.2 273.9h0M472.0 280.4h0M491.3 235.8h0M509.1 267.6h0M491.8 284.1h0M495.6 257.1h0M497.9 289.3h0M491.8 264.4h0M499.9 243.0h0M521.2 262.6h0M509.7 248.1h0M496.5 259.9h0M490.3 272.3h0M463.9 271.2h0M514.3 265.0h0M469.7 273.0h0M480.0 266.3h0M509.1 284.3h0M497.2 258.8h0M512.2 262.6h0M492.9 269.8h0M515.7 259.6h0" stroke="#a8a8a8" stroke-width="1.3" stroke-linecap="round" fill="none"/>
<path d="M468.9 292.1h0M465.4 276.4h0M519.7 261.7h0M474.7 277.8h0M465.9 270.0h0M477.7 258.9h0M496.4 270.3h0M484.3 251.5h0M508.0 272.4h0M486.4 285.3h0M475.6 248.0h0M474.4 251.5h0M505.4 249.5h0M503.7 269.8h0M519.8 277.7h0M465.2 246.4h0M483.5 255.7h0M471.0 265.3h0M485.1 253.8h0M478.2 281.4h0M498.1 261.5h0M481.5 234.2h0M509.8 256.2h0M492.3 268.9h0M472.1 246.4h0M485.1 244.1h0M478.9 264.8h0M494.5 270.2h0M470.8 235.3h0M512.0 284.5h0M495.1 264.6h0M516.5 250.7h0M500.1 252.4h0M486.5 244.8h0M496.1 241.6h0M473.1 249.1h0M475.3 258.9h0M474.3 236.5h0M468.3 248.7h0M521.2 257.2h0M479.6 274.6h0M506.2 235.5h0M467.1 240.8h0M468.7 245.4h0M508.5 275.2h0M521.1 273.4h0M467.1 286.5h0M517.9 238.9h0M472.1 244.5h0M473.9 236.3h0M475.8 247.4h0M491.9 239.9h0M468.7 291.1h0M472.3 233.3h0" stroke="#101010" stroke-width="1.8" stroke-linecap="round" fill="none"/>
<rect x="196.5" y="297.6" width="61.5" height="63.2" fill="url(#fine11)" />
<rect x="262.9" y="297.6" width="61.5" height="63.2" fill="url(#fine12)" />
</svg>
<div class="abs sb" style="left:531px;top:163px;width:14px;height:245px;"></div>
<div class="abs sbb" style="left:531px;top:163px;width:14px;height:14px;"></div>
<div class="abs sbt" style="left:531px;top:177px;width:14px;height:217px;"></div>
<div class="abs sbb" style="left:531px;top:394px;width:14px;height:14px;"></div>
<svg class="abs" style="left:551px;top:163px;" width="149" height="231" viewBox="551 163 149 231">
<defs>
<filter id="pb" x="-10%" y="-10%" width="120%" height="120%" color-interpolation-filters="sRGB"><feGaussianBlur stdDeviation="3"/></filter>
<filter id="pd" x="-20%" y="-20%" width="140%" height="140%" color-interpolation-filters="sRGB"><feGaussianBlur stdDeviation="1.1"/></filter>
<filter id="mal" filterUnits="userSpaceOnUse" x="531" y="143" width="189" height="271" color-interpolation-filters="sRGB">
<feTurbulence type="fractalNoise" baseFrequency="0.032" numOctaves="5" seed="8" result="t"/>
<feDisplacementMap in="SourceGraphic" in2="t" scale="12" xChannelSelector="R" yChannelSelector="G" result="d"/>
<feColorMatrix in="t" type="matrix" values="0 0 1 0 0  0 0 1 0 0  0 0 1 0 0  0 0 0 0 1" result="n"/>
<feComposite in="d" in2="n" operator="arithmetic" k1="0" k2="1" k3="0.5" k4="-0.25" result="f"/>
<feComponentTransfer in="f">
<feFuncR type="table" tableValues="0.016 0.020 0.020 0.024 0.024 0.024 0.020 0.024 0.031 0.024 0.031 0.039 0.031 0.039 0.047 0.039 0.055 0.078 0.055 0.118 0.157"/>
<feFuncG type="table" tableValues="0.118 0.176 0.275 0.373 0.471 0.541 0.510 0.573 0.627 0.588 0.667 0.729 0.682 0.769 0.816 0.773 0.843 0.882 0.831 0.910 0.933"/>
<feFuncB type="table" tableValues="0.110 0.157 0.227 0.314 0.392 0.447 0.431 0.471 0.490 0.471 0.494 0.502 0.490 0.494 0.490 0.486 0.486 0.502 0.486 0.529 0.549"/>
</feComponentTransfer>
</filter>
<clipPath id="pc"><rect x="551" y="163" width="149" height="231"/></clipPath>
</defs>
<g clip-path="url(#pc)">
<g filter="url(#mal)">
<rect x="520" y="130" width="210" height="300" fill="#949494"/>
<g filter="url(#pb)">
<rect x="520" y="130" width="210" height="300" fill="#949494"/>
<path d="M520 130h150l-8 36l-24 14l-20 8l-14 -6l-14 -10l-20 8l-24 -4l-26 -8z" fill="#545454"/>
<path d="M668 130h62v50l-44 6l-12 36l-8 14l-30 -2l-22 -24l2 -22l24 -10l16 -18z" fill="#cccccc"/>
<path d="M520 184l50 -4l14 6l-6 44l8 34l40 0l10 10l-30 8l-40 -4l-46 4z" fill="#a3a3a3"/>
<ellipse cx="562" cy="200" rx="9" ry="14" fill="#7a7a7a"/>
<ellipse cx="566" cy="236" rx="10" ry="10" fill="#808080"/>
<ellipse cx="560" cy="272" rx="8" ry="8" fill="#757575"/>
<ellipse cx="598" cy="208" rx="15" ry="24" fill="#575757"/>
<ellipse cx="694" cy="212" rx="20" ry="34" fill="#5c5c5c"/>
<ellipse cx="698" cy="196" rx="10" ry="12" fill="#4c4c4c"/>
<ellipse cx="647" cy="250" rx="20" ry="17" fill="#525252"/>
<path d="M575 272l40 -6l40 14l80 -16v170h-100l-18 -56l-26 -26l-24 -30z" fill="#737373"/>
<ellipse cx="614" cy="296" rx="36" ry="22" fill="#575757"/>
<ellipse cx="650" cy="345" rx="30" ry="30" fill="#6e6e6e"/>
<path d="M520 318l50 4l6 24l-6 24l-50 6z" fill="#4f4f4f"/>
<path d="M520 366h66l30 20l10 50h-106z" fill="#616161"/>
<path d="M520 286l40 2l30 4l4 12l-30 4l-44 2z" fill="#b8b8b8"/>
<path d="M576 300l8 20l8 26l20 8l20 16l4 40h-9l-6 -32l-18 -14l-24 -8l-8 -30l-4 -22z" fill="#e0e0e0"/>
<path d="M660 268l30 -8l40 4v50l-50 10l-24 -14z" fill="#858585"/>
</g>
<g filter="url(#pd)">
<path d="M552.5 168.6L565.3 176L577 178.2L587.8 172.8L596.3 168.6L598.5 175L607 181.4L617.7 186.7L626.3 182.5L637 177.1L647.7 175L656.2 169.6L667 164" fill="none" stroke="#121212" stroke-width="8" stroke-linejoin="round"/>
<path d="M596 166l5 10l10 8" fill="none" stroke="#050505" stroke-width="7"/>
<path d="M556 170l8 5" fill="none" stroke="#080808" stroke-width="6"/>
<ellipse cx="648" cy="246" rx="12" ry="9.5" fill="#141414"/>
<ellipse cx="647" cy="244" rx="8" ry="5.5" fill="#000000"/>
<ellipse cx="574" cy="210" rx="3.5" ry="3.5" fill="#0f0f0f"/>
<path d="M630 213l11 9" stroke="#141414" stroke-width="5" stroke-linecap="round"/>
<path d="M600 251l12 4" stroke="#141414" stroke-width="5" stroke-linecap="round"/>
<ellipse cx="569" cy="255" rx="4" ry="3" fill="#404040"/>
<path d="M695 266l-8 12l-14 18l-17 8" fill="none" stroke="#242424" stroke-width="4" stroke-linecap="round"/>
<path d="M558 326l5 12l-3 14l6 14" fill="none" stroke="#3d3d3d" stroke-width="4" stroke-linecap="round"/>
</g>
</g>
</g>
</svg>
<div class="abs sb" style="left:701px;top:163px;width:14px;height:231px;"></div>
<div class="abs sbb" style="left:701px;top:163px;width:14px;height:14px;"></div>
<div class="abs sbt" style="left:701px;top:177px;width:14px;height:47px;"></div>
<div class="abs sbb" style="left:701px;top:380px;width:14px;height:14px;"></div>
<div class="abs sb" style="left:551px;top:394px;width:150px;height:14px;"></div>
<div class="abs sbb" style="left:551px;top:394px;width:14px;height:14px;"></div>
<div class="abs sbt" style="left:565px;top:394px;width:27px;height:14px;"></div>
<div class="abs sbb" style="left:687px;top:394px;width:14px;height:14px;"></div>
<div class="abs" style="left:701px;top:394px;width:14px;height:14px;background:#424242;"></div>
<svg class="abs" style="left:0;top:0;" width="748" height="522" viewBox="0 0 748 522">
<path d="M534.5 172.5 L541.5 172.5 L538.0 168.5 Z" fill="#c4c4c4"/><path d="M534.5 399.0 L541.5 399.0 L538.0 403.0 Z" fill="#c4c4c4"/><path d="M704.5 172.5 L711.5 172.5 L708.0 168.5 Z" fill="#c4c4c4"/><path d="M704.5 385.0 L711.5 385.0 L708.0 389.0 Z" fill="#c4c4c4"/><path d="M559.5 397.5 L559.5 404.5 L555.5 401.0 Z" fill="#c4c4c4"/><path d="M692.5 397.5 L692.5 404.5 L696.5 401.0 Z" fill="#c4c4c4"/>
<path d="M548.5 280v16" stroke="#9a9a9a" stroke-width="1.6" stroke-dasharray="1.6 1.5" fill="none"/>
</svg>
<div class="abs field" style="left:195px;top:410px;width:521px;height:24px;"></div>
<div class="abs lbl" style="left:197px;top:414px;font-size:13.5px;color:#8f8f8f;letter-spacing:.3px;">Search</div>
<div class="abs btn" style="left:195px;top:435px;width:129px;height:22px;"></div>
<div class="abs btn" style="left:325px;top:435px;width:129px;height:22px;"></div>
<svg class="abs" style="left:0;top:0;" width="748" height="522" viewBox="0 0 748 522"><path d="M253.3 440.6h4.8l2.6 2h4v9.6h-11.4z" fill="none" stroke="#d2d2d2" stroke-width="1.2" stroke-linejoin="round"/><path d="M253 440.2h5.2l2.6 2h4.4v2.2h-6.4l-2 1.5h-3.8z" fill="#d2d2d2"/><path d="M384 442.9H395" stroke="#d0d0d0" stroke-width="1.5" fill="none"/><path d="M387.6 442.4V440.6H391.8V442.4" stroke="#d0d0d0" stroke-width="1.2" fill="none"/><path d="M386 443.4V452H393.5V443.4" stroke="#d0d0d0" stroke-width="1.6" fill="none" stroke-linejoin="round"/></svg>
<div class="abs btn" style="left:565px;top:487px;width:83px;height:23px;"></div>
<div class="abs lbl" style="left:565px;top:491px;width:83px;text-align:center;font-size:13.5px;letter-spacing:.3px;"><u>C</u>ancel</div>
<div class="abs btn" style="left:655px;top:487px;width:81px;height:23px;border-color:#586c82;box-shadow:0 0 0 1px #46505c,inset 0 0 0 1px #4a5460;background:linear-gradient(#4b4e52,#43464a);"></div>
<div class="abs lbl" style="left:654px;top:491px;width:82px;text-align:center;font-size:13.5px;letter-spacing:.3px;"><u>O</u>K</div>
</div>
</body></html>
